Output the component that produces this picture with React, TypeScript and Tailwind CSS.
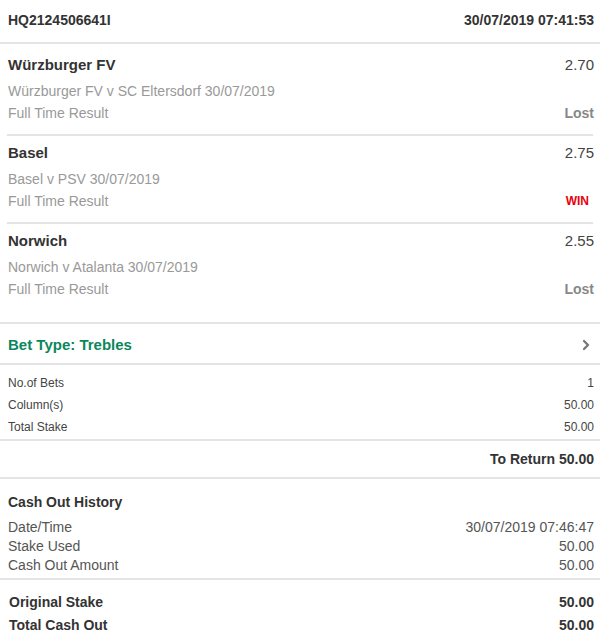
import { ChevronRight } from "lucide-react";

const selections = [
  {
    name: "Würzburger FV",
    odds: "2.70",
    event: "Würzburger FV v SC Eltersdorf 30/07/2019",
    result: "Lost",
  },
  {
    name: "Basel",
    odds: "2.75",
    event: "Basel v PSV 30/07/2019",
    result: "WIN",
  },
  {
    name: "Norwich",
    odds: "2.55",
    event: "Norwich v Atalanta 30/07/2019",
    result: "Lost",
  },
];

function App() {
  return (
    <div className="min-h-screen w-[600px] bg-white font-['Liberation_Sans',Arial,sans-serif] text-[#333]">
      <header className="flex h-[44px] items-center justify-between border-b-2 border-[#e4e4e4] pb-[1px] pl-2 pr-[6px] text-[14px] font-bold">
        <span>HQ2124506641I</span>
        <span>30/07/2019 07:41:53</span>
      </header>

      <section className="border-b-2 border-[#e4e4e4]">
        {selections.map((s, i) => (
          <Selection key={s.name} {...s} first={i === 0} last={i === selections.length - 1} />
        ))}
      </section>

      <div className="flex h-[41px] items-center justify-between border-b-2 border-[#e4e4e4] pl-2 pr-[6px] pt-[3px]">
        <span className="text-[15px] font-bold text-[#0a875b]">Bet Type: Trebles</span>
        <ChevronRight className="h-4 w-4 text-[#777]" strokeWidth={3.5} />
      </div>

      <div className="border-b-2 border-[#e4e4e4] pb-[1px] pl-2 pr-[6px] pt-[7px] text-[12px] text-[#444]">
        <InfoRow label="No.of Bets" value="1" />
        <InfoRow label="Column(s)" value="50.00" />
        <InfoRow label="Total Stake" value="50.00" />
      </div>

      <div className="flex h-[38px] items-center justify-end border-b-2 border-[#e4e4e4] pr-[6px] text-[14px] font-bold">
        To Return 50.00
      </div>

      <div className="border-b-2 border-[#e4e4e4] pb-[3px] pl-2 pr-[6px] pt-[13px]">
        <div className="flex h-[20px] items-center text-[14px] font-bold">Cash Out History</div>
        <div className="mt-[6px] text-[14px] text-[#555]">
          <HistoryRow label="Date/Time" value="30/07/2019 07:46:47" />
          <HistoryRow label="Stake Used" value="50.00" />
          <HistoryRow label="Cash Out Amount" value="50.00" />
        </div>
      </div>

      <div className="pl-[9px] pr-[6px] pt-[11px] text-[14px] font-bold">
        <div className="flex h-[23px] items-center justify-between">
          <span>Original Stake</span>
          <span>50.00</span>
        </div>
        <div className="flex h-[23px] items-center justify-between">
          <span>Total Cash Out</span>
          <span>50.00</span>
        </div>
      </div>
    </div>
  );
}

function Selection({
  name,
  odds,
  event,
  result,
  first,
  last,
}: {
  name: string;
  odds: string;
  event: string;
  result: string;
  first: boolean;
  last: boolean;
}) {
  return (
    <div>
      <div className={`pl-2 pr-[6px] ${first ? "pt-[11px]" : "pt-[7px]"} ${last ? "pb-[22px]" : "pb-[10px]"}`}>
        <div className="flex h-[20px] items-center justify-between">
          <span className="text-[15px] font-bold text-[#333]">{name}</span>
          <span className="text-[15px] text-[#444]">{odds}</span>
        </div>
        <div className="mt-[5px] flex h-[22px] items-center text-[14px] text-[#999]">{event}</div>
        <div className="flex h-[22px] items-center justify-between text-[14px] text-[#999]">
          <span>Full Time Result</span>
          {result === "WIN" ? (
            <span className="mr-[5px] text-[12px] font-bold text-[#e8000b]">WIN</span>
          ) : (
            <span className="font-bold text-[#888]">{result}</span>
          )}
        </div>
      </div>
      {!last && <div className="mx-[7px] h-[2px] bg-[#e4e4e4]" />}
    </div>
  );
}

function InfoRow({ label, value }: { label: string; value: string }) {
  return (
    <div className="flex h-[22px] items-center justify-between">
      <span>{label}</span>
      <span>{value}</span>
    </div>
  );
}

function HistoryRow({ label, value }: { label: string; value: string }) {
  return (
    <div className="flex h-[19px] items-center justify-between">
      <span>{label}</span>
      <span>{value}</span>
    </div>
  );
}

export default App;
